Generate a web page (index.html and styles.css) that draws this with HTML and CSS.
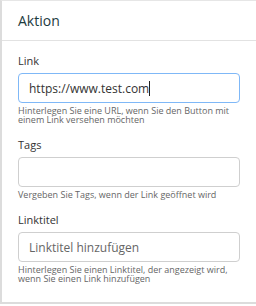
FILE: index.html
```html
<!DOCTYPE html>
<html lang="de">
<head>
    <meta charset="UTF-8">
    <meta name="viewport" content="width=device-width, initial-scale=1.0">
    <title>Aktion</title>
    <link rel="stylesheet" href="styles.css">
</head>
<body>
    <div class="panel">
        <div class="panel-header">Aktion</div>
        <div class="panel-body">
            <div class="field">
                <label for="link">Link</label>
                <div class="input focused" id="link">https://www.test.com<span class="caret"></span></div>
                <p class="hint">Hinterlegen Sie eine URL, wenn Sie den Button mit einem Link versehen möchten</p>
            </div>
            <div class="field">
                <label for="tags">Tags</label>
                <input type="text" id="tags" class="input">
                <p class="hint">Vergeben Sie Tags, wenn der Link geöffnet wird</p>
            </div>
            <div class="field">
                <label for="title">Linktitel</label>
                <input type="text" id="title" class="input" placeholder="Linktitel hinzufügen">
                <p class="hint">Hinterlegen Sie einen Linktitel, der angezeigt wird, wenn Sie einen Link hinzufügen</p>
            </div>
        </div>
    </div>
</body>
</html>
```

FILE: styles.css
```css
body {
    font-family: "Open Sans", Arial, sans-serif;
    margin: 0;
    padding: 0;
    background-color: #fff;
}
.panel {
    width: 256px;
    height: 304px;
    box-sizing: border-box;
    border-left: 2px solid #dcdcdc;
    border-top: 1px solid #e6e6e6;
    border-bottom: 2px solid #dcdcdc;
}
.panel-header {
    height: 40px;
    box-sizing: border-box;
    padding: 10px 16px 0;
    font-size: 14px;
    color: #1d3a3d;
    border-bottom: 1px solid #e2e2e2;
}
.panel-body {
    padding: 12px 14px 0 16px;
}
.field {
    margin-bottom: 13px;
}
label {
    display: block;
    font-size: 11px;
    color: #333;
    margin-bottom: 5px;
}
.input {
    display: flex;
    align-items: center;
    width: 222px;
    height: 30px;
    box-sizing: border-box;
    padding: 0 10px;
    border: 1px solid #cfcfcf;
    border-radius: 4px;
    font-family: inherit;
    font-size: 12px;
    color: #333;
    outline: none;
}
.input::placeholder {
    color: #666;
}
.focused {
    border-color: #7fb8f7;
}
.caret {
    display: inline-block;
    width: 1px;
    height: 15px;
    background-color: #222;
}
.hint {
    margin: 3px 0 0;
    font-size: 9px;
    line-height: 9px;
    color: #666;
}
```
